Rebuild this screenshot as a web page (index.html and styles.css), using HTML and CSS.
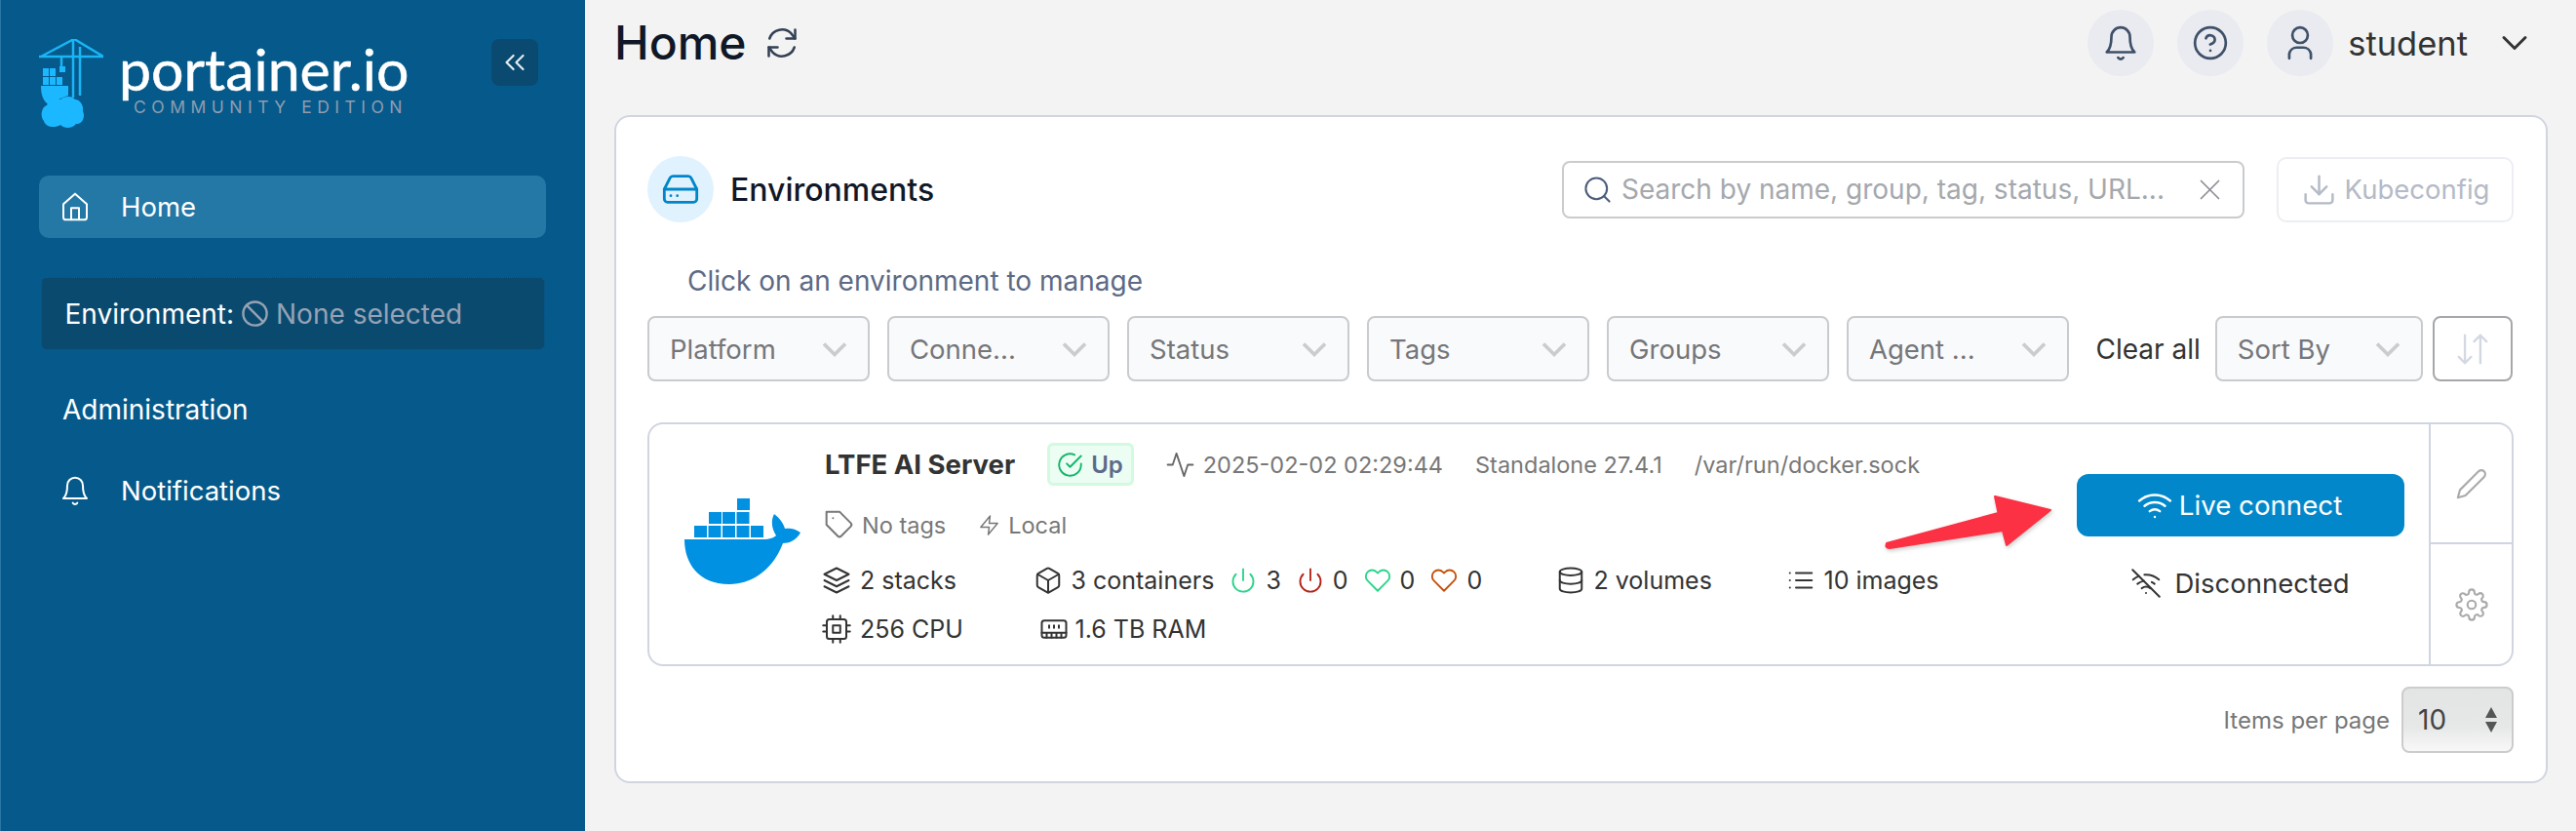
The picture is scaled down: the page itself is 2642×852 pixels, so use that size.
FILE: index.html
```html
<!DOCTYPE html>
<html>
  <head>
    <meta charset="utf-8" />
    <title>Home | Portainer</title>
    <link rel="stylesheet" href="styles.css" />
  </head>
  <body>
    <svg class="defs" width="0" height="0">
      <symbol id="i-bell" viewBox="0 0 24 24"><path d="M18 8A6 6 0 0 0 6 8c0 7-2 9-3 10h18c-1-1-3-3-3-10" /><path d="M13.7 21.5a2 2 0 0 1-3.4 0" /></symbol>
      <symbol id="i-down" viewBox="0 0 24 24"><path d="M6 9l6 6 6-6" /></symbol>
      <symbol id="i-power" viewBox="0 0 24 24"><path d="M18.36 6.64a9 9 0 1 1-12.73 0" /><path d="M12 2v10" /></symbol>
      <symbol id="i-heart" viewBox="0 0 24 24"><path d="M20.84 4.61a5.5 5.5 0 0 0-7.78 0L12 5.67l-1.06-1.06a5.5 5.5 0 0 0-7.78 7.78l1.06 1.06L12 21.23l7.78-7.78 1.06-1.06a5.5 5.5 0 0 0 0-7.78z" /></symbol>
    </svg>

    <aside class="sidebar">
      <div class="brand">
        <svg class="crane" viewBox="0 0 66 92">
          <path class="crane-line" d="M0 18H66M36 0L2 18M36 0L66 18M35 0V60M42 8V58M23 18V28" />
          <path class="crane-fill" d="M21 28h6v6h-6zM4 30h6v8H4zM11 30h6v8h-6zM4 39h6v8H4zM11 39h6v8h-6zM18 39h6v8h-6z" />
          <path class="crane-fill" d="M2 48H30V58C24 60 18 62 12 68C6 66 2 60 2 48Z" />
          <path class="crane-fill" d="M8 68C10 62 18 60 22 62C26 58 34 58 37 62C42 62 46 68 45 74C48 80 44 88 38 87C34 92 26 92 22 88C16 92 6 90 5 84C1 80 2 70 8 68Z" />
        </svg>
        <div class="brand-text">
          <div class="brand-name">portainer.io</div>
          <div class="brand-sub">COMMUNITY EDITION</div>
        </div>
        <button class="collapse">
          <svg class="ic" viewBox="0 0 24 24"><path d="M11 17l-5-5 5-5" /><path d="M18 17l-5-5 5-5" /></svg>
        </button>
      </div>

      <a class="nav-item active">
        <svg class="ic nav-ic" viewBox="0 0 24 24"><path d="M3 10l9-8 9 8v10a2 2 0 0 1-2 2H5a2 2 0 0 1-2-2z" /><path d="M9 22V13h6v9" /></svg>
        Home
      </a>

      <div class="env-box">
        <span>Environment:</span>
        <svg class="ic ban" viewBox="0 0 24 24"><circle cx="12" cy="12" r="10" /><path d="M4.93 4.93l14.14 14.14" /></svg>
        <span class="none">None selected</span>
      </div>

      <div class="nav-plain">Administration</div>
      <a class="nav-item notif">
        <svg class="ic nav-ic"><use href="#i-bell" /></svg>
        Notifications
      </a>
    </aside>

    <main class="main">
      <header class="topbar">
        <h1>Home</h1>
        <svg class="ic refresh" viewBox="0 0 24 24"><path d="M21 3v6h-6" /><path d="M3 21v-6h6" /><path d="M3.5 9a9 9 0 0 1 14.9-3.4L21 9" /><path d="M3 15l2.6 3.4A9 9 0 0 0 20.5 15" /></svg>
        <div class="top-right">
          <span class="round"><svg class="ic"><use href="#i-bell" /></svg></span>
          <span class="round"><svg class="ic" viewBox="0 0 24 24"><circle cx="12" cy="12" r="10" /><path d="M9.1 9a3 3 0 0 1 5.8 1c0 2-3 3-3 3" /><path d="M12 17h.01" /></svg></span>
          <span class="round"><svg class="ic" viewBox="0 0 24 24"><circle cx="12" cy="7" r="5" /><path d="M5 22v-3a5 5 0 0 1 5-4h4a5 5 0 0 1 5 4v3" /></svg></span>
          <span class="username">student</span>
          <svg class="ic user-down"><use href="#i-down" /></svg>
        </div>
      </header>

      <section class="card">
        <div class="card-head">
          <span class="head-icon">
            <svg class="ic" viewBox="0 0 24 24"><path d="M2 12h20" /><path d="M5.45 5.11L2 12v6a2 2 0 0 0 2 2h16a2 2 0 0 0 2-2v-6l-3.45-6.89A2 2 0 0 0 16.76 4H7.24a2 2 0 0 0-1.79 1.11z" /><path d="M6 16h.01M10 16h.01" /></svg>
          </span>
          <h2>Environments</h2>
          <div class="search">
            <svg class="ic search-ic" viewBox="0 0 24 24"><circle cx="11" cy="11" r="9" /><path d="M22 22l-4.6-4.6" /></svg>
            <span class="placeholder">Search by name, group, tag, status, URL...</span>
            <svg class="ic search-x" viewBox="0 0 24 24"><path d="M20 4L4 20M4 4l16 16" /></svg>
          </div>
          <button class="kube">
            <svg class="ic" viewBox="0 0 24 24"><path d="M21 15v4a2 2 0 0 1-2 2H5a2 2 0 0 1-2-2v-4" /><path d="M7 10l5 5 5-5" /><path d="M12 15V3" /></svg>
            Kubeconfig
          </button>
        </div>

        <p class="hint">Click on an environment to manage</p>

        <div class="filters">
          <div class="filter"><span>Platform</span><svg class="caret"><use href="#i-down" /></svg></div>
          <div class="filter"><span>Conne...</span><svg class="caret"><use href="#i-down" /></svg></div>
          <div class="filter"><span>Status</span><svg class="caret"><use href="#i-down" /></svg></div>
          <div class="filter"><span>Tags</span><svg class="caret"><use href="#i-down" /></svg></div>
          <div class="filter"><span>Groups</span><svg class="caret"><use href="#i-down" /></svg></div>
          <div class="filter"><span>Agent ...</span><svg class="caret"><use href="#i-down" /></svg></div>
          <span class="clear">Clear all</span>
          <div class="filter sort"><span>Sort By</span><svg class="caret"><use href="#i-down" /></svg></div>
          <button class="order">
            <svg class="ic" viewBox="0 0 24 24"><path d="M7 3v18M3 17l4 4 4-4" /><path d="M17 21V3M13 7l4-4 4 4" /></svg>
          </button>
        </div>

        <article class="env">
          <svg class="docker" viewBox="0 0 119 88">
            <path d="M10 28h13v12H10zM24.5 28h13v12h-13zM39 28h13v12H39zM53.5 28h13v12h-13zM68 28h13v12H68zM25 14h13v12H25zM39 14h13v12H39zM53.5 14h13v12h-13zM54 0h13v12H54z" />
            <path d="M0 42H80C88 42 92 40 94 38C90 32 88 24 92 16C98 20 102 27 103 31C108 30 114 31 119 35C115 43 107 46 101 46C92 70 72 88 46 88C14 88 0 66 0 42Z" />
          </svg>

          <div class="env-info">
            <div class="env-row first">
              <strong class="env-name">LTFE AI Server</strong>
              <span class="up">
                <svg class="ic" viewBox="0 0 24 24"><path d="M22 11v1a10 10 0 1 1-5.9-9.1" /><path d="M22 4L12 14l-3-3" /></svg>
                Up
              </span>
              <svg class="ic activity" viewBox="0 0 24 24"><path d="M22 12h-4l-3 9-6-18-3 9H2" /></svg>
              <span class="stamp">2025-02-02 02:29:44</span>
              <span class="version">Standalone 27.4.1</span>
              <span>/var/run/docker.sock</span>
            </div>
            <div class="env-row second">
              <svg class="ic tag" viewBox="0 0 24 24"><path d="M20.6 13.4l-7.2 7.2a2 2 0 0 1-2.8 0L2 12V2h10l8.6 8.6a2 2 0 0 1 0 2.8z" /><path d="M7 7h.01" /></svg>
              <span class="no-tags">No tags</span>
              <svg class="ic zap" viewBox="0 0 24 24"><path d="M13 2L3 14h9l-1 8 10-12h-9z" /></svg>
              <span>Local</span>
            </div>
            <div class="env-row stats">
              <span class="stat stacks">
                <svg class="ic" viewBox="0 0 24 24"><path d="M12 2L2 7l10 5 10-5z" /><path d="M2 17l10 5 10-5" /><path d="M2 12l10 5 10-5" /></svg>
                2 stacks
              </span>
              <span class="stat containers">
                <svg class="ic" viewBox="0 0 24 24"><path d="M21 16V8a2 2 0 0 0-1-1.7l-7-4a2 2 0 0 0-2 0l-7 4A2 2 0 0 0 3 8v8a2 2 0 0 0 1 1.7l7 4a2 2 0 0 0 2 0l7-4a2 2 0 0 0 1-1.7z" /><path d="M3.3 7L12 12l8.7-5" /><path d="M12 22V12" /></svg>
                3 containers
                <svg class="ic mini green"><use href="#i-power" /></svg>3
                <svg class="ic mini red"><use href="#i-power" /></svg>0
                <svg class="ic mini green"><use href="#i-heart" /></svg>0
                <svg class="ic mini orange"><use href="#i-heart" /></svg>0
              </span>
              <span class="stat volumes">
                <svg class="ic" viewBox="0 0 24 24"><ellipse cx="12" cy="5" rx="9" ry="3" /><path d="M21 12c0 1.7-4 3-9 3s-9-1.3-9-3" /><path d="M3 5v14c0 1.7 4 3 9 3s9-1.3 9-3V5" /></svg>
                2 volumes
              </span>
              <span class="stat">
                <svg class="ic" viewBox="0 0 24 24"><path d="M8 6h13M8 12h13M8 18h13M3 6h.01M3 12h.01M3 18h.01" /></svg>
                10 images
              </span>
            </div>
            <div class="env-row stats last">
              <span class="stat cpu">
                <svg class="ic" viewBox="0 0 24 24"><rect x="4" y="4" width="16" height="16" rx="2" /><rect x="9" y="9" width="6" height="6" /><path d="M9 1v3M15 1v3M9 20v3M15 20v3M20 9h3M20 14h3M1 9h3M1 14h3" /></svg>
                256 CPU
              </span>
              <span class="stat ram">
                <svg class="ic" viewBox="0 0 24 24"><path d="M6 19v-3M10 19v-3M14 19v-3M18 19v-3M8 11V9M16 11V9M12 11V9M2 15h20" /><path d="M2 7a2 2 0 0 1 2-2h16a2 2 0 0 1 2 2v10a2 2 0 0 1-2 2H4a2 2 0 0 1-2-2z" /></svg>
                1.6 TB RAM
              </span>
            </div>
          </div>

          <div class="env-actions">
            <button class="live">
              <svg class="ic" viewBox="0 0 24 24"><path d="M5 12.5a11 11 0 0 1 14 0" /><path d="M1.4 9a16 16 0 0 1 21.2 0" /><path d="M8.5 16.1a6 6 0 0 1 7 0" /><path d="M12 20h.01" /></svg>
              Live connect
            </button>
            <div class="offline">
              <svg class="ic" viewBox="0 0 24 24"><path d="M1 1l22 22" /><path d="M16.7 11.1A11 11 0 0 1 19 12.5" /><path d="M5 12.5a11 11 0 0 1 5.2-2.4" /><path d="M10.7 5A16 16 0 0 1 22.6 9" /><path d="M1.4 9a16 16 0 0 1 4.7-2.9" /><path d="M8.5 16.1a6 6 0 0 1 7 0" /><path d="M12 20h.01" /></svg>
              Disconnected
            </div>
          </div>

          <div class="env-side">
            <div class="side-btn top">
              <svg class="ic" viewBox="0 0 24 24"><path d="M17 3a2.8 2.8 0 1 1 4 4L7.5 20.5 2 22l1.5-5.5z" /></svg>
            </div>
            <div class="side-btn">
              <svg class="ic" viewBox="0 0 24 24"><circle cx="12" cy="12" r="3" /><path d="M19.4 15a1.65 1.65 0 0 0 .33 1.82l.06.06a2 2 0 0 1 0 2.83 2 2 0 0 1-2.83 0l-.06-.06a1.65 1.65 0 0 0-1.82-.33 1.65 1.65 0 0 0-1 1.51V21a2 2 0 0 1-2 2 2 2 0 0 1-2-2v-.09A1.65 1.65 0 0 0 9 19.4a1.65 1.65 0 0 0-1.82.33l-.06.06a2 2 0 0 1-2.83 0 2 2 0 0 1 0-2.83l.06-.06a1.65 1.65 0 0 0 .33-1.82 1.65 1.65 0 0 0-1.51-1H3a2 2 0 0 1-2-2 2 2 0 0 1 2-2h.09A1.65 1.65 0 0 0 4.6 9a1.65 1.65 0 0 0-.33-1.82l-.06-.06a2 2 0 0 1 0-2.83 2 2 0 0 1 2.83 0l.06.06a1.65 1.65 0 0 0 1.82.33H9a1.65 1.65 0 0 0 1-1.51V3a2 2 0 0 1 2-2 2 2 0 0 1 2 2v.09a1.65 1.65 0 0 0 1 1.51 1.65 1.65 0 0 0 1.82-.33l.06-.06a2 2 0 0 1 2.83 0 2 2 0 0 1 0 2.83l-.06.06a1.65 1.65 0 0 0-.33 1.82V9a1.65 1.65 0 0 0 1.51 1H21a2 2 0 0 1 2 2 2 2 0 0 1-2 2h-.09a1.65 1.65 0 0 0-1.51 1z" /></svg>
            </div>
          </div>

          <!-- annotation drawn on top of the screenshot -->
          <svg class="red-arrow" viewBox="0 0 170 56">
            <path d="M1 49L115.5 18L112 1L169 15L124 51L120 36L4 54Q-1 54 1 49Z" />
          </svg>
        </article>

        <div class="pager">
          <span>Items per page</span>
          <div class="page-select">
            10
            <span class="spin"><i class="up-tri"></i><i class="down-tri"></i></span>
          </div>
        </div>
      </section>
    </main>
  </body>
</html>
```

FILE: styles.css
```css
* {
  box-sizing: border-box;
}
html,
body {
  height: 852px;
  overflow: hidden;
}
body {
  display: flex;
  margin: 0;
  background-color: #f3f3f3;
  font-family: "Inter", "Liberation Sans", sans-serif;
  font-size: 25px;
  color: #333;
}
.defs {
  position: absolute;
}
.ic {
  flex: none;
  width: 24px;
  height: 24px;
  fill: none;
  stroke: currentColor;
  stroke-width: 2;
  stroke-linecap: round;
  stroke-linejoin: round;
}
button {
  font-family: inherit;
}

/* sidebar */
.sidebar {
  flex: none;
  width: 600px;
  padding: 40px 40px 0 39px;
  border-left: 1px solid #2a76a3;
  background-color: #055a8b;
  color: #fff;
}
.brand {
  display: flex;
  height: 92px;
}
.crane {
  flex: none;
  width: 66px;
  height: 92px;
}
.crane-line {
  fill: none;
  stroke: #19b5f5;
  stroke-width: 2.5;
}
.crane-fill {
  fill: #1cb8ff;
}
.brand-text {
  margin-left: 16px;
}
.brand-name {
  font-family: "Lato", sans-serif;
  font-size: 59px;
  line-height: 61px;
  white-space: nowrap;
  -webkit-text-stroke: 0.5px #fff;
}
.brand-sub {
  margin-left: 15px;
  font-size: 17.5px;
  line-height: 18px;
  letter-spacing: 5.5px;
  white-space: nowrap;
  color: #8f9db0;
}
.collapse {
  display: flex;
  align-items: center;
  justify-content: center;
  width: 48px;
  height: 48px;
  margin: 0 8px 0 auto;
  padding: 0;
  border: 0;
  border-radius: 8px;
  background-color: #0b4a70;
  color: #e6edf2;
}
.collapse .ic {
  width: 34px;
  height: 34px;
  stroke-width: 1.5;
}
.nav-item {
  display: flex;
  align-items: center;
  height: 64px;
  margin-top: 48px;
  padding-left: 21px;
  border-radius: 10px;
  font-size: 27.5px;
}
.nav-item.active {
  background-color: #2478a5;
}
.nav-ic {
  width: 32px;
  height: 32px;
  margin-right: 31px;
  stroke-width: 1.5;
}
.env-box {
  display: flex;
  align-items: center;
  height: 75px;
  margin: 40px 1px 0 1.5px;
  padding-left: 24px;
  border: 1px dotted #0a6199;
  border-radius: 6px;
  background-color: #0b4a6f;
  font-size: 28px;
}
.ban {
  width: 29px;
  height: 29px;
  margin: 0 7px;
  color: #96a2b4;
}
.none {
  color: #96a2b4;
}
.nav-plain {
  margin: 44px 0 0 24px;
  font-size: 28px;
  line-height: 34px;
}
.nav-item.notif {
  margin-top: 41px;
  height: 50px;
}

/* main area */
.main {
  flex: 1;
  padding: 0 32px 0 30px;
}
.topbar {
  display: flex;
  align-items: center;
  height: 88px;
  margin-bottom: 30px;
}
h1 {
  margin: 0 0 2px;
  font-size: 48px;
  font-weight: 500;
  color: #101828;
}
.refresh {
  width: 36px;
  height: 36px;
  margin-left: 18px;
  stroke-width: 1.7;
  color: #344054;
}
.top-right {
  display: flex;
  align-items: center;
  margin-left: auto;
}
.round {
  display: flex;
  align-items: center;
  justify-content: center;
  width: 68px;
  height: 68px;
  margin-left: 24px;
  border-radius: 50%;
  background-color: #e9ebf0;
  color: #3f5069;
}
.round .ic {
  width: 38px;
  height: 38px;
  stroke-width: 1.7;
}
.username {
  margin-left: 15px;
  font-size: 34.5px;
}
.user-down {
  width: 44px;
  height: 44px;
  margin: 0 12px 0 26px;
  stroke-width: 1.6;
}

.card {
  height: 685px;
  padding: 40px 33px 0 32px;
  border: 2px solid #d0d5e0;
  border-radius: 16px;
  background-color: #fff;
}
.card-head {
  display: flex;
  align-items: center;
  height: 68px;
}
.head-icon {
  display: flex;
  align-items: center;
  justify-content: center;
  width: 68px;
  height: 68px;
  border-radius: 50%;
  background-color: #e0f2fe;
  color: #0086c9;
}
.head-icon .ic {
  width: 40px;
  height: 40px;
  stroke-width: 1.7;
}
h2 {
  margin: 0 0 0 17px;
  font-size: 32px;
  font-weight: 500;
  color: #101828;
}
.search {
  display: flex;
  align-items: center;
  width: 700px;
  height: 59px;
  margin-left: auto;
  padding: 0 20px 0 20px;
  border: 2px solid #c9cbce;
  border-radius: 8px;
  color: #a5a8ad;
  font-size: 28px;
  white-space: nowrap;
}
.search-ic {
  width: 29px;
  height: 29px;
  margin-right: 10px;
  stroke-width: 1.7;
  color: #4d5d7d;
}
.search-x {
  width: 27px;
  height: 27px;
  margin-left: auto;
  stroke-width: 1.5;
  color: #8a8e94;
}
.kube {
  display: flex;
  align-items: center;
  justify-content: center;
  gap: 8px;
  width: 243px;
  height: 67px;
  margin-left: 33px;
  padding: 0;
  border: 2px solid #eceef3;
  border-radius: 10px;
  background-color: #fff;
  color: #b4bac6;
  font-size: 27.5px;
}
.kube .ic {
  width: 37px;
  height: 37px;
  stroke-width: 1.6;
}
.hint {
  margin: 42px 0 0 41px;
  font-size: 28px;
  line-height: 36px;
  color: #5c6a85;
}
.filters {
  display: flex;
  align-items: center;
  gap: 18px;
  margin-top: 18px;
}
.filter {
  display: flex;
  flex: none;
  align-items: center;
  justify-content: space-between;
  width: 228px;
  height: 67px;
  padding: 0 12px 0 21px;
  border: 2px solid #c9cbce;
  border-radius: 8px;
  background-color: #f9fafc;
  color: #757679;
  font-size: 27.5px;
}
.caret {
  width: 44px;
  height: 44px;
  fill: none;
  stroke: #ccc;
  stroke-width: 2;
}
.clear {
  margin: 0 -3px 0 9.5px;
  font-size: 28px;
  white-space: nowrap;
}
.filter.sort {
  width: 213px;
}
.order {
  display: flex;
  align-items: center;
  justify-content: center;
  width: 82px;
  height: 67px;
  margin-left: -8px;
  padding: 0;
  border: 2px solid #a5a7aa;
  border-radius: 8px;
  background-color: #fff;
  color: #d3d8e2;
}
.order .ic {
  width: 38px;
  height: 38px;
  stroke-width: 1.5;
}

/* environment row */
.env {
  position: relative;
  display: flex;
  width: 1914px;
  height: 250px;
  margin-top: 42px;
  border: 2px solid #d0d5e0;
  border-radius: 16px;
}
.docker {
  flex: none;
  width: 119px;
  height: 88px;
  margin: 76px 0 0 36px;
  fill: #0091e2;
}
.env-info {
  flex: none;
  width: 1309px;
  padding: 19px 0 0 22px;
}
.env-row {
  display: flex;
  align-items: center;
  white-space: nowrap;
}
.env-row.first {
  height: 44px;
  padding-left: 3px;
  color: #777;
  font-size: 23.5px;
}
.env-name {
  margin-right: 33px;
  font-size: 27.5px;
  font-weight: 700;
  color: #333;
}
.up {
  display: flex;
  align-items: center;
  gap: 8px;
  height: 44px;
  padding: 0 8px 0 7px;
  border: 3px solid #d1fadf;
  border-radius: 6px;
  background-color: #ecfdf3;
  color: #5b6b8c;
  font-size: 24px;
  font-weight: 600;
}
.up .ic {
  width: 27px;
  height: 27px;
  stroke-width: 1.7;
  color: #12b76a;
}
.activity {
  width: 31px;
  height: 31px;
  margin: 0 8px 0 32px;
  stroke-width: 1.4;
  color: #666;
}
.stamp {
  margin-right: 33px;
}
.version {
  margin-right: 33px;
}
.env-row.second {
  height: 32px;
  margin-top: 24px;
  color: #777;
  font-size: 23.5px;
}
.env-row.second .ic {
  width: 32px;
  height: 32px;
  stroke-width: 1.5;
}
.env-row.second .tag {
  margin-left: 2px;
}
.no-tags {
  margin: 0 33px 0 7px;
}
.env-row.second .zap {
  width: 23px;
  height: 23px;
  margin-right: 8px;
}
.env-row.stats {
  height: 34px;
  margin-top: 24px;
  font-size: 25px;
}
.env-row.stats.last {
  margin-top: 16px;
}
.stat {
  display: flex;
  align-items: center;
  gap: 9px;
}
.stat .ic {
  width: 30px;
  height: 30px;
  stroke-width: 1.6;
}
.stacks {
  width: 216.5px;
}
.containers {
  width: 536px;
}
.volumes {
  width: 236px;
}
.cpu {
  width: 223px;
}
.ram {
  gap: 6.5px;
}
.stat .mini {
  width: 28px;
  height: 28px;
  margin-left: 7px;
}
.green {
  color: #2bd48a;
}
.red {
  color: #b42318;
}
.orange {
  color: #c4500c;
}
.env-actions {
  display: flex;
  flex-direction: column;
  align-items: center;
  width: 336px;
  margin-top: 51px;
}
.live {
  display: flex;
  align-items: center;
  justify-content: center;
  gap: 7px;
  width: 336px;
  height: 64px;
  padding: 0 2px 0 0;
  border: 0;
  border-radius: 12px;
  background-color: #0288ca;
  color: #fff;
  font-size: 27.7px;
}
.live .ic {
  width: 36px;
  height: 36px;
  stroke-width: 1.6;
}
.offline {
  display: flex;
  align-items: center;
  gap: 14px;
  margin-top: 31px;
  font-size: 27.5px;
}
.offline .ic {
  width: 30px;
  height: 30px;
  stroke-width: 1.6;
}
.env-side {
  display: flex;
  flex: none;
  flex-direction: column;
  width: 85px;
  margin-left: 25px;
  border-left: 2px solid #d0d5e0;
}
.side-btn {
  display: flex;
  flex: 1;
  align-items: center;
  justify-content: center;
  color: #aaa;
}
.side-btn.top {
  flex: none;
  height: 123px;
  border-bottom: 2px solid #d0d5e0;
}
.side-btn .ic {
  width: 34px;
  height: 34px;
  stroke-width: 1.5;
}
.red-arrow {
  position: absolute;
  left: 1268px;
  top: 73px;
  width: 170px;
  height: 56px;
  overflow: visible;
  fill: #fc3144;
  stroke: #fc3144;
  stroke-width: 2;
  stroke-linejoin: round;
  filter: drop-shadow(1px 2px 2px rgba(0, 0, 0, 0.2));
}

/* page size */
.pager {
  display: flex;
  align-items: center;
  justify-content: flex-end;
  gap: 12px;
  width: 1914px;
  margin-top: 21px;
  color: #777;
  font-size: 24px;
}
.page-select {
  position: relative;
  display: flex;
  align-items: center;
  width: 115px;
  height: 68px;
  padding-left: 15px;
  border: 2px solid #ccc;
  border-radius: 8px;
  background: linear-gradient(#e3e4e4, #e6e7e7 60%, #f8f8f8);
  color: #444;
  font-size: 28px;
}
.spin {
  display: flex;
  flex-direction: column;
  gap: 4px;
  margin-left: 40px;
}
.up-tri {
  border: 6px solid transparent;
  border-top: 0;
  border-bottom: 11px solid #555;
}
.down-tri {
  border: 6px solid transparent;
  border-bottom: 0;
  border-top: 11px solid #555;
}
```
